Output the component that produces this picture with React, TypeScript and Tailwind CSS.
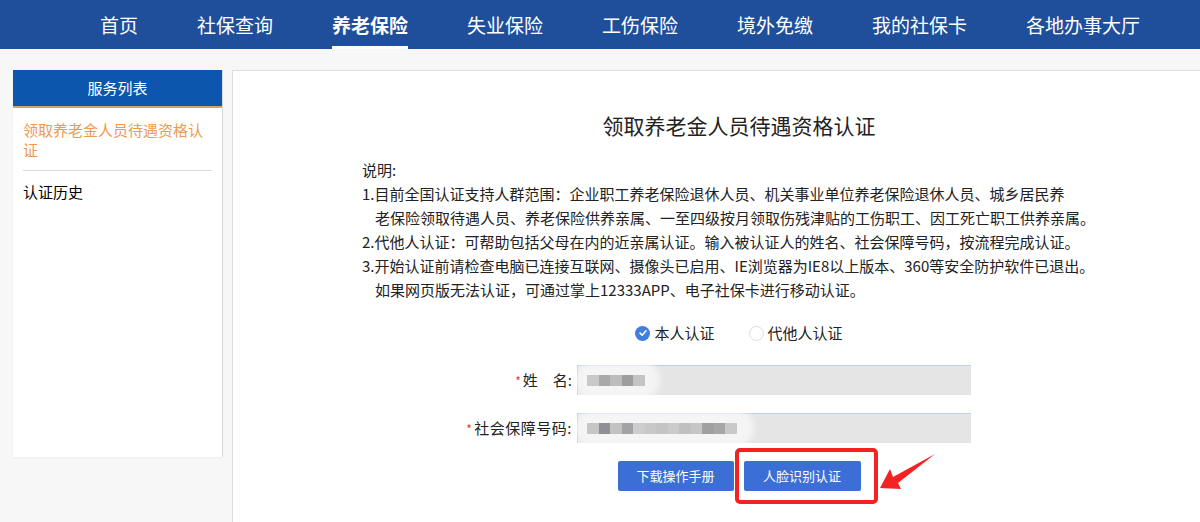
import React from 'react';

const navItems = ['首页', '社保查询', '养老保险', '失业保险', '工伤保险', '境外免缴', '我的社保卡', '各地办事大厅'];

const notes = [
  { text: '说明:', indent: false },
  { text: '1.目前全国认证支持人群范围：企业职工养老保险退休人员、机关事业单位养老保险退休人员、城乡居民养', indent: false },
  { text: '老保险领取待遇人员、养老保险供养亲属、一至四级按月领取伤残津贴的工伤职工、因工死亡职工供养亲属。', indent: true },
  { text: '2.代他人认证：可帮助包括父母在内的近亲属认证。输入被认证人的姓名、社会保障号码，按流程完成认证。', indent: false },
  { text: '3.开始认证前请检查电脑已连接互联网、摄像头已启用、IE浏览器为IE8以上版本、360等安全防护软件已退出。', indent: false },
  { text: '如果网页版无法认证，可通过掌上12333APP、电子社保卡进行移动认证。', indent: true },
];

// pixelated blur over the personal data
const nameCells = ['#c9c9c9', '#a9a9a9', '#bdbdbd', '#9e9e9e', '#c4c4c4'];
const idCells = ['#c6c6c6', '#8f8f95', '#c2c2c2', '#a3a3a6', '#cdcdcd', '#c8c8c8', '#c4c4c4', '#cbcbcb', '#c0c0c0', '#c6c6c6', '#a0a0a0', '#a7a7a7', '#c9c9c9'];

function Mosaic({ cells, blurWidth }: { cells: string[]; blurWidth: string }) {
  return (
    <div className="relative h-[30px] w-[394px] border-t border-l border-[#b9d1ea] bg-[#e5e5e5]">
      <div className={`absolute -top-[5px] -left-[4px] h-[38px] rounded-full bg-white/60 blur-[3px] ${blurWidth}`} />
      <div className="absolute left-[9px] top-[9px] flex">
        {cells.map((c, i) => (
          <div key={i} className="h-[11px] w-[11.5px]" style={{ backgroundColor: c }} />
        ))}
      </div>
    </div>
  );
}

export default function App() {
  return (
    <div className="h-[522px] w-full overflow-hidden bg-[#f7f7f7] font-['Noto_Sans_CJK_SC',sans-serif] text-[#333]">
      {/* Top nav */}
      <div className="flex h-[49px] gap-[59px] bg-[#1f4f9b] pl-[100px]">
        {navItems.map((item) => (
          <div
            key={item}
            className={`relative flex items-center text-[19px] leading-none text-white ${item === '养老保险' ? 'font-bold' : ''}`}
          >
            {item}
            {item === '养老保险' && <div className="absolute bottom-0 left-0 right-0 h-[3px] bg-white" />}
          </div>
        ))}
      </div>

      <div className="flex gap-[10px] pl-[13px] pt-[21px]">
        {/* Side list */}
        <div className="h-[387px] w-[209px] shrink-0 bg-white shadow-[1px_0_0_#d8d8d8,0_1px_2px_#eee]">
          <div className="flex h-[38px] items-center justify-center border-b-2 border-[#d9a35a] bg-[#0c56ae] text-[15px] text-white">
            服务列表
          </div>
          <div className="px-[10px]">
            <div className="border-b border-[#dcdcdc] pt-[12px] pb-[10px] text-[15px] leading-[20px] text-[#ef9a4c]">
              领取养老金人员待遇资格认证
            </div>
            <div className="pt-[11px] text-[15px] leading-[20px] text-black">认证历史</div>
          </div>
        </div>

        {/* Main panel */}
        <div className="flex h-[460px] w-[1014px] shrink-0 flex-col items-center border border-[#dedede] bg-white">
          <div className="pt-[39px] text-[21px] leading-[30px] text-[#222]">领取养老金人员待遇资格认证</div>

          <div className="mt-[18px] self-start pl-[129px] text-[15px] leading-[24px] text-[#222]">
            {notes.map((n, i) => (
              <div key={i} className={`whitespace-nowrap ${n.indent ? 'pl-[13px]' : ''}`}>
                {n.text}
              </div>
            ))}
          </div>

          {/* Who is certified */}
          <div className="mt-[21px] flex h-[20px] items-center text-[15px] text-[#222]">
            <div className="flex items-center gap-[4px]">
              <span className="flex h-[15px] w-[15px] items-center justify-center rounded-full bg-[#3f7fe0]">
                <svg viewBox="0 0 12 12" className="h-[10px] w-[10px]">
                  <path d="M2.5 6.2 L5 8.6 L9.6 3.4" fill="none" stroke="white" strokeWidth="1.9" strokeLinecap="round" strokeLinejoin="round" />
                </svg>
              </span>
              本人认证
            </div>
            <div className="ml-[34px] flex items-center gap-[4px]">
              <span className="h-[15px] w-[15px] rounded-full border border-[#dcdcdc] bg-white" />
              代他人认证
            </div>
          </div>

          {/* Form */}
          <div className="mt-[22px] flex items-center self-start pl-[232px]">
            <div className="w-[112px] pr-[5px] text-right text-[15px] text-[#222]">
              <span className="mr-[2px] text-[12px] text-[#e53935]">*</span>姓　名:
            </div>
            <Mosaic cells={nameCells} blurWidth="w-[86px]" />
          </div>
          <div className="mt-[18px] flex items-center self-start pl-[232px]">
            <div className="w-[112px] pr-[5px] text-right text-[15px] tracking-[0.5px] text-[#222]">
              <span className="mr-[2px] text-[12px] text-[#e53935]">*</span>社会保障号码:
            </div>
            <Mosaic cells={idCells} blurWidth="w-[180px]" />
          </div>

          <div className="mt-[18px] flex gap-[10px]">
            <button className="h-[30px] w-[116px] rounded-[2px] bg-[#3b6fd5] text-[13px] text-white">下载操作手册</button>
            <div className="relative">
              <button className="h-[30px] w-[117px] rounded-[2px] bg-[#3b6fd5] text-[13px] text-white">人脸识别认证</button>
              <div className="absolute -top-[13px] -bottom-[13px] -left-[9px] -right-[17px] rounded-[5px] border-4 border-[#f42222]" />
              <svg viewBox="0 0 60 44" className="absolute left-[134px] -top-[8px] h-[44px] w-[60px]">
                <polygon points="2,35 12,16 15,24 57,1 20,30 23,36" fill="#f42222" />
              </svg>
            </div>
          </div>
        </div>
      </div>
    </div>
  );
}
